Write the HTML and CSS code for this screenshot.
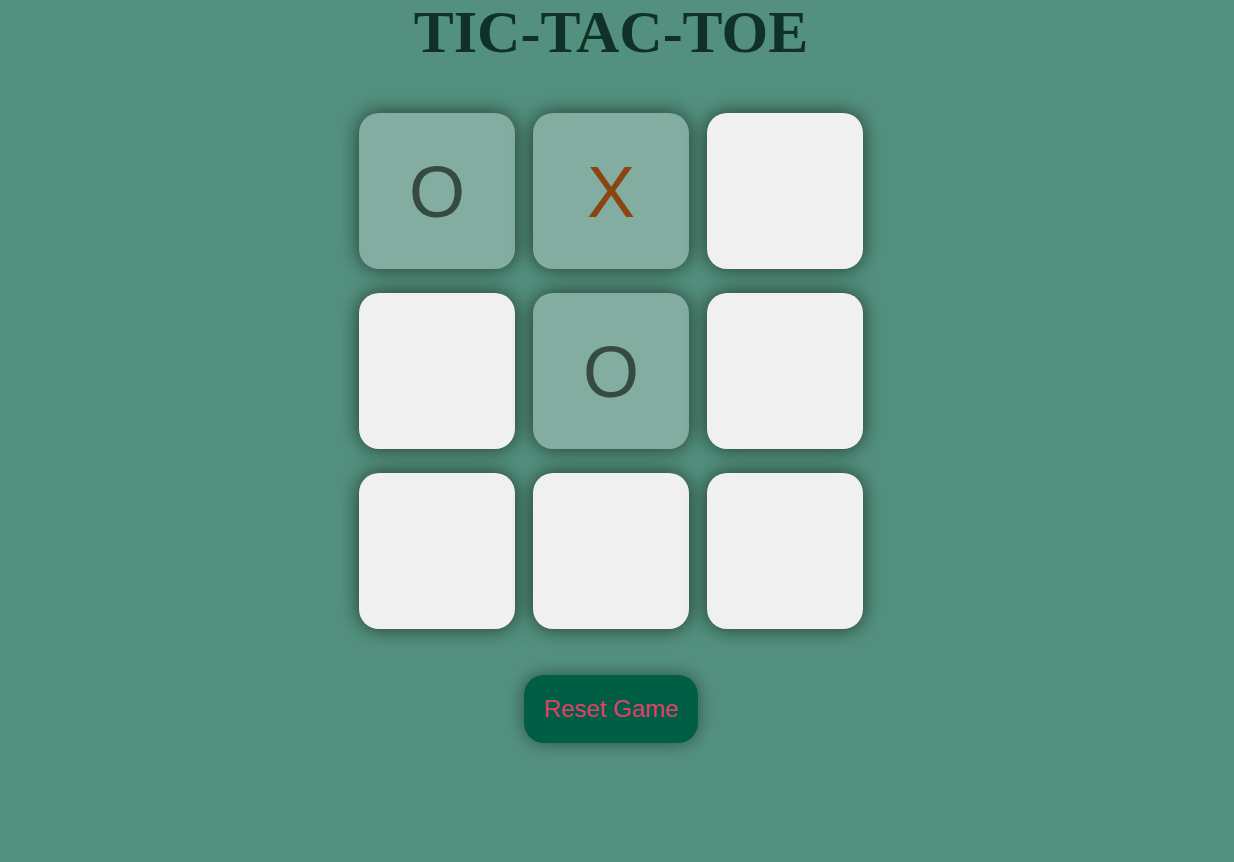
FILE: index.html
```html
<!DOCTYPE html>
<html lang="en">
<head>
<meta charset="utf-8">
<title>Tic-Tac-Toe</title>
<link rel="stylesheet" href="styles.css">
</head>
<body>
<main class="game">
  <h1 class="title">TIC-TAC-TOE</h1>
  <div class="board">
    <div class="cell filled o">O</div>
    <div class="cell filled x">X</div>
    <div class="cell"></div>
    <div class="cell"></div>
    <div class="cell filled o">O</div>
    <div class="cell"></div>
    <div class="cell"></div>
    <div class="cell"></div>
    <div class="cell"></div>
  </div>
  <button class="reset">Reset Game</button>
</main>
</body>
</html>
```

FILE: styles.css
```css
html, body {
  margin: 0;
  padding: 0;
  background: #53917e;
  height: 100%;
}

body {
  font-family: "Liberation Sans", Arial, sans-serif;
}

.game {
  display: flex;
  flex-direction: column;
  align-items: center;
  padding-right: 12px;
}

.title {
  margin: 0;
  font-family: "Liberation Serif", "Times New Roman", serif;
  font-weight: bold;
  font-size: 60px;
  line-height: 64px;
  color: #0f3128;
}

.board {
  margin-top: 49px;
  display: grid;
  grid-template-columns: repeat(3, 156px);
  grid-auto-rows: 156px;
  column-gap: 18px;
  row-gap: 24px;
}

.cell {
  background: #f0f0f0;
  border-radius: 20px;
  box-shadow: 0 0 20px rgba(0, 0, 0, 0.62);
  display: flex;
  align-items: center;
  justify-content: center;
  padding-top: 2px;
  box-sizing: border-box;
  font-family: "Liberation Sans", Arial, sans-serif;
  font-size: 72px;
}

.cell.filled {
  background: #83ada0;
}

.cell.o {
  color: #344a43;
}

.cell.x {
  color: #8b4513;
}

.reset {
  margin-top: 46px;
  padding: 20px;
  border: none;
  border-radius: 20px;
  background: #005e45;
  color: #e2406b;
  font-family: "Liberation Sans", Arial, sans-serif;
  font-size: 24px;
  line-height: normal;
  box-shadow: 0 0 18px rgba(0, 0, 0, 0.45);
  cursor: pointer;
}
```
